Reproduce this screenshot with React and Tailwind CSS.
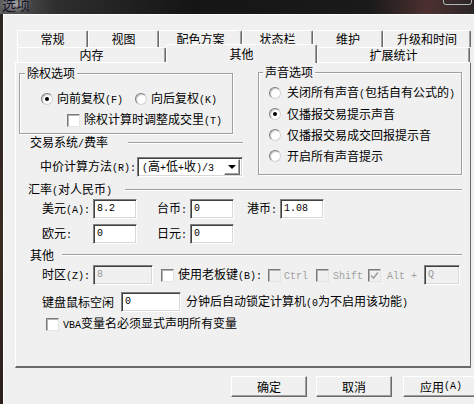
import React from "react";

// SimSun-like look: CJK in Noto, half-width latin in a small mono face
const MONO = "font-['Liberation_Mono',monospace] text-[10px]";
const SUNKEN =
  "border border-t-[#808080] border-l-[#808080] border-r-white border-b-white shadow-[inset_1px_1px_0_#404040,inset_-1px_-1px_0_#d8d8d8]";
const RAISED =
  "border border-t-white border-l-white border-r-[#696969] border-b-[#696969] shadow-[inset_-1px_-1px_0_#a0a0a0]";

function T({ s }) {
  const parts = s.match(/[\x20-\x7e]+|[^\x20-\x7e]+/g) || [];
  return parts.map((p, i) =>
    /^[\x20-\x7e]/.test(p) ? (
      <span key={i} className={MONO}>
        {p}
      </span>
    ) : (
      <span key={i}>{p}</span>
    )
  );
}

function Radio({ label, checked, gap = "ml-[4px]", className = "" }) {
  return (
    <div className={`flex h-[14px] items-center whitespace-nowrap ${className}`}>
      <span className="flex h-[12px] w-[12px] shrink-0 items-center justify-center rounded-full border border-t-[#7d7d7d] border-l-[#7d7d7d] border-r-[#d2d2d2] border-b-[#d2d2d2] bg-white shadow-[inset_1px_1px_1px_#c8c8c8]">
        {checked && <span className="h-[4px] w-[4px] rounded-full bg-black" />}
      </span>
      <span className={gap}>
        <T s={label} />
      </span>
    </div>
  );
}

function Check({ disabled, checked, className = "" }) {
  return (
    <span
      className={`flex h-[13px] w-[13px] shrink-0 items-center justify-center border border-t-[#7a7a7a] border-l-[#7a7a7a] border-r-[#e4e4e4] border-b-[#e4e4e4] shadow-[inset_1px_1px_0_#b4b4b4] ${
        disabled ? "bg-[#f0f0f0]" : "bg-white"
      } ${className}`}
    >
      {checked && (
        <svg width="9" height="9" viewBox="0 0 9 9">
          <path d="M1 4.5 L3.5 7 L8 1.5" stroke="#a0a0a0" strokeWidth="1.6" fill="none" />
        </svg>
      )}
    </span>
  );
}

function Field({ w, value, disabled, className = "" }) {
  return (
    <div
      className={`flex h-[20px] shrink-0 items-center pl-[3px] ${SUNKEN} ${w} ${
        disabled ? "bg-[#f0f0f0] text-[#9a9a9a]" : "bg-white"
      } ${className}`}
    >
      <T s={value} />
    </div>
  );
}

function Btn({ label, className = "" }) {
  return (
    <div className={`flex h-[21px] w-[76px] shrink-0 items-center justify-center bg-[#f0f0f0] ${RAISED} ${className}`}>
      <T s={label} />
    </div>
  );
}

function Group({ title, className, legendClass, children }) {
  return (
    <fieldset
      className={`border border-[#a0a0a0] shadow-[inset_1px_1px_0_#fff,1px_1px_0_#fff] ${className}`}
    >
      <legend className={`bg-[#f0f0f0] px-[2px] leading-[14px] ${legendClass}`}>{title}</legend>
      {children}
    </fieldset>
  );
}

function Rule({ className = "" }) {
  return <div className={`h-0 border-t border-b border-t-[#a0a0a0] border-b-white ${className}`} />;
}

const backTabs = [
  ["常规", "w-[71px]"],
  ["视图", "w-[71px]"],
  ["配色方案", "w-[83px]"],
  ["状态栏", "w-[71px]"],
  ["维护", "w-[70px]"],
  ["升级和时间", "w-[88px]"],
];

const TAB = "flex shrink-0 items-center justify-center rounded-t-[2px] border-t border-l border-r border-t-white border-l-white border-r-[#696969] shadow-[inset_-1px_0_0_#a0a0a0] bg-[#f0f0f0]";

export default function App() {
  return (
    <div className="flex h-[404px] w-[474px] flex-col overflow-hidden bg-[#f0f0f0] font-['Noto_Sans_CJK_SC',sans-serif] text-[12px] leading-[14px] text-black">
      {/* title bar (cut off at the top) */}
      <div className="flex h-[14px] shrink-0 items-start justify-between overflow-hidden bg-[linear-gradient(90deg,#5c5c5c_0%,#2e2e2e_12%,#151515_40%,#1a1a1a_78%,#4c3030_90%,#2c2626_100%)]">
        <span className="-mt-[5px] px-[2px] text-[14px] leading-[18px] text-[#141428] bg-[radial-gradient(closest-side,#a8a8a8,#a8a8a800)]">
          选项
        </span>
        <div className="-mt-[10px] mr-[2px] h-[15px] w-[29px] rounded-[3px] border border-[#b8b8b8] shadow-[inset_0_0_0_1px_#2a2a2a]" />
      </div>

      <div className="flex flex-1">
        <div className="w-[3px] shrink-0 bg-[linear-gradient(180deg,#2a2622,#3a2a22_60%,#2a201c)]" />
        <div className="flex flex-1 flex-col border-t border-l border-t-white border-l-white">
          {/* tabs */}
          <div className="mt-[15px] flex h-[17px] pl-[13px]">
            {backTabs.map(([t, w]) => (
              <div key={t} className={`${TAB} h-[17px] ${w}`}>
                {t}
              </div>
            ))}
          </div>
          <div className="flex h-[15px] items-end pl-[13px]">
            <div className={`${TAB} h-[15px] w-[149px]`}>内存</div>
            <div className={`${TAB} relative z-10 -mb-px h-[19px] w-[151px] pb-[1px]`}>其他</div>
            <div className={`${TAB} h-[15px] w-[153px]`}>扩展统计</div>
          </div>

          {/* tab page */}
          <div className="ml-[11px] flex h-[306px] w-[456px] shrink-0 flex-col border-t border-l border-r border-b-2 border-t-white border-l-white border-r-[#696969] border-b-[#6a6a6a] pl-[3px]">
            <div className="flex items-start">
              <div className="flex w-[224px] shrink-0 flex-col">
                <Group title="除权选项" className="mt-[3px] h-[68px] w-[214px]" legendClass="ml-[5px]">
                  <div className="mt-[12px] flex items-center pl-[21px]">
                    <Radio label="向前复权(F)" checked />
                    <Radio label="向后复权(K)" className="ml-[12px]" />
                  </div>
                  <div className="mt-[7px] flex h-[14px] items-center pl-[47px]">
                    <Check />
                    <span className="ml-[4px] whitespace-nowrap">
                      <T s="除权计算时调整成交里(T)" />
                    </span>
                  </div>
                </Group>

                <div className="mt-[2px] flex h-[14px] items-center pl-[11px]">
                  <span className="whitespace-nowrap">
                    <T s="交易系统/费率" />
                  </span>
                  <Rule className="ml-[20px] flex-1" />
                </div>

                <div className="mt-[7px] flex h-[20px] items-center pl-[21px]">
                  <span className="whitespace-nowrap">
                    <T s="中价计算方法(R):" />
                  </span>
                  <div className={`ml-auto flex h-[20px] w-[106px] items-center bg-white pl-[4px] pr-[2px] ${SUNKEN}`}>
                    <span className="flex-1 whitespace-nowrap">
                      <T s="(高+低+收)/3" />
                    </span>
                    <div className={`flex h-[16px] w-[16px] items-center justify-center ${RAISED}`}>
                      <span className="h-0 w-0 border-x-[4px] border-t-[4px] border-x-transparent border-t-black" />
                    </div>
                  </div>
                </div>
              </div>

              <Group title="声音选项" className="ml-[15px] mt-[2px] h-[110px] w-[204px]" legendClass="ml-[4px]">
                <div className="flex flex-col gap-[7px] pl-[10px] pt-[7px]">
                  <Radio label="关闭所有声音(包括自有公式的)" gap="ml-[6px]" />
                  <Radio label="仅播报交易提示声音" gap="ml-[6px]" checked />
                  <Radio label="仅播报交易成交回报提示音" gap="ml-[6px]" />
                  <Radio label="开启所有声音提示" gap="ml-[6px]" />
                </div>
              </Group>
            </div>

            {/* 汇率 */}
            <div className="mt-[6px] flex h-[14px] items-center pl-[9px] pr-[8px]">
              <span className="whitespace-nowrap">
                <T s="汇率(对人民币)" />
              </span>
              <Rule className="ml-[13px] flex-1" />
            </div>
            <div className="mt-[2px] flex h-[20px] items-center pl-[23px]">
              <span className="w-[51px] shrink-0 whitespace-nowrap">
                <T s="美元(A):" />
              </span>
              <Field w="w-[44px]" value="8.2" />
              <span className="ml-[20px] w-[33px] shrink-0 whitespace-nowrap">
                <T s="台币:" />
              </span>
              <Field w="w-[44px]" value="0" />
              <span className="ml-[13px] w-[33px] shrink-0 whitespace-nowrap">
                <T s="港币:" />
              </span>
              <Field w="w-[44px]" value="1.08" />
            </div>
            <div className="mt-[5px] flex h-[20px] items-center pl-[23px]">
              <span className="w-[51px] shrink-0 whitespace-nowrap">
                <T s="欧元:" />
              </span>
              <Field w="w-[44px]" value="0" />
              <span className="ml-[20px] w-[33px] shrink-0 whitespace-nowrap">
                <T s="日元:" />
              </span>
              <Field w="w-[44px]" value="0" />
            </div>

            {/* 其他 */}
            <div className="mt-[4px] flex h-[14px] items-center pl-[11px] pr-[8px]">
              <span className="whitespace-nowrap">其他</span>
              <Rule className="ml-[8px] flex-1" />
            </div>
            <div className="mt-[3px] flex h-[20px] items-center pl-[23px]">
              <span className="w-[51px] shrink-0 whitespace-nowrap">
                <T s="时区(Z):" />
              </span>
              <Field w="w-[60px]" value="8" disabled />
              <Check className="ml-[8px]" />
              <span className="ml-[4px] w-[84px] shrink-0 whitespace-nowrap">
                <T s="使用老板键(B):" />
              </span>
              <Check className="ml-[6px]" disabled />
              <span className="ml-[3px] w-[24px] shrink-0 text-[#a0a0a0]">
                <T s="Ctrl" />
              </span>
              <Check className="ml-[8px]" disabled />
              <span className="ml-[4px] w-[30px] shrink-0 text-[#a0a0a0]">
                <T s="Shift" />
              </span>
              <Check className="ml-[5px]" disabled checked />
              <span className="ml-[6px] w-[30px] shrink-0 whitespace-pre text-[#a0a0a0]">
                <T s="Alt +" />
              </span>
              <Field w="w-[36px]" value="Q" disabled className="ml-[7px]" />
            </div>
            <div className="mt-[7px] flex h-[20px] items-center pl-[23px]">
              <span className="w-[79px] shrink-0 whitespace-nowrap">键盘鼠标空闲</span>
              <Field w="w-[60px]" value="0" />
              <span className="ml-[5px] whitespace-nowrap">
                <T s="分钟后自动锁定计算机(0为不启用该功能)" />
              </span>
            </div>
            <div className="mt-[5px] flex h-[14px] items-center pl-[27px]">
              <Check />
              <span className="ml-[4px] whitespace-nowrap">
                <T s="VBA变量名必须显式声明所有变量" />
              </span>
            </div>
          </div>

          {/* buttons */}
          <div className="mt-[8px] flex pl-[227px]">
            <Btn label="确定" />
            <Btn label="取消" className="ml-[9px]" />
            <Btn label="应用(A)" className="ml-[11px]" />
          </div>
        </div>
      </div>
    </div>
  );
}
